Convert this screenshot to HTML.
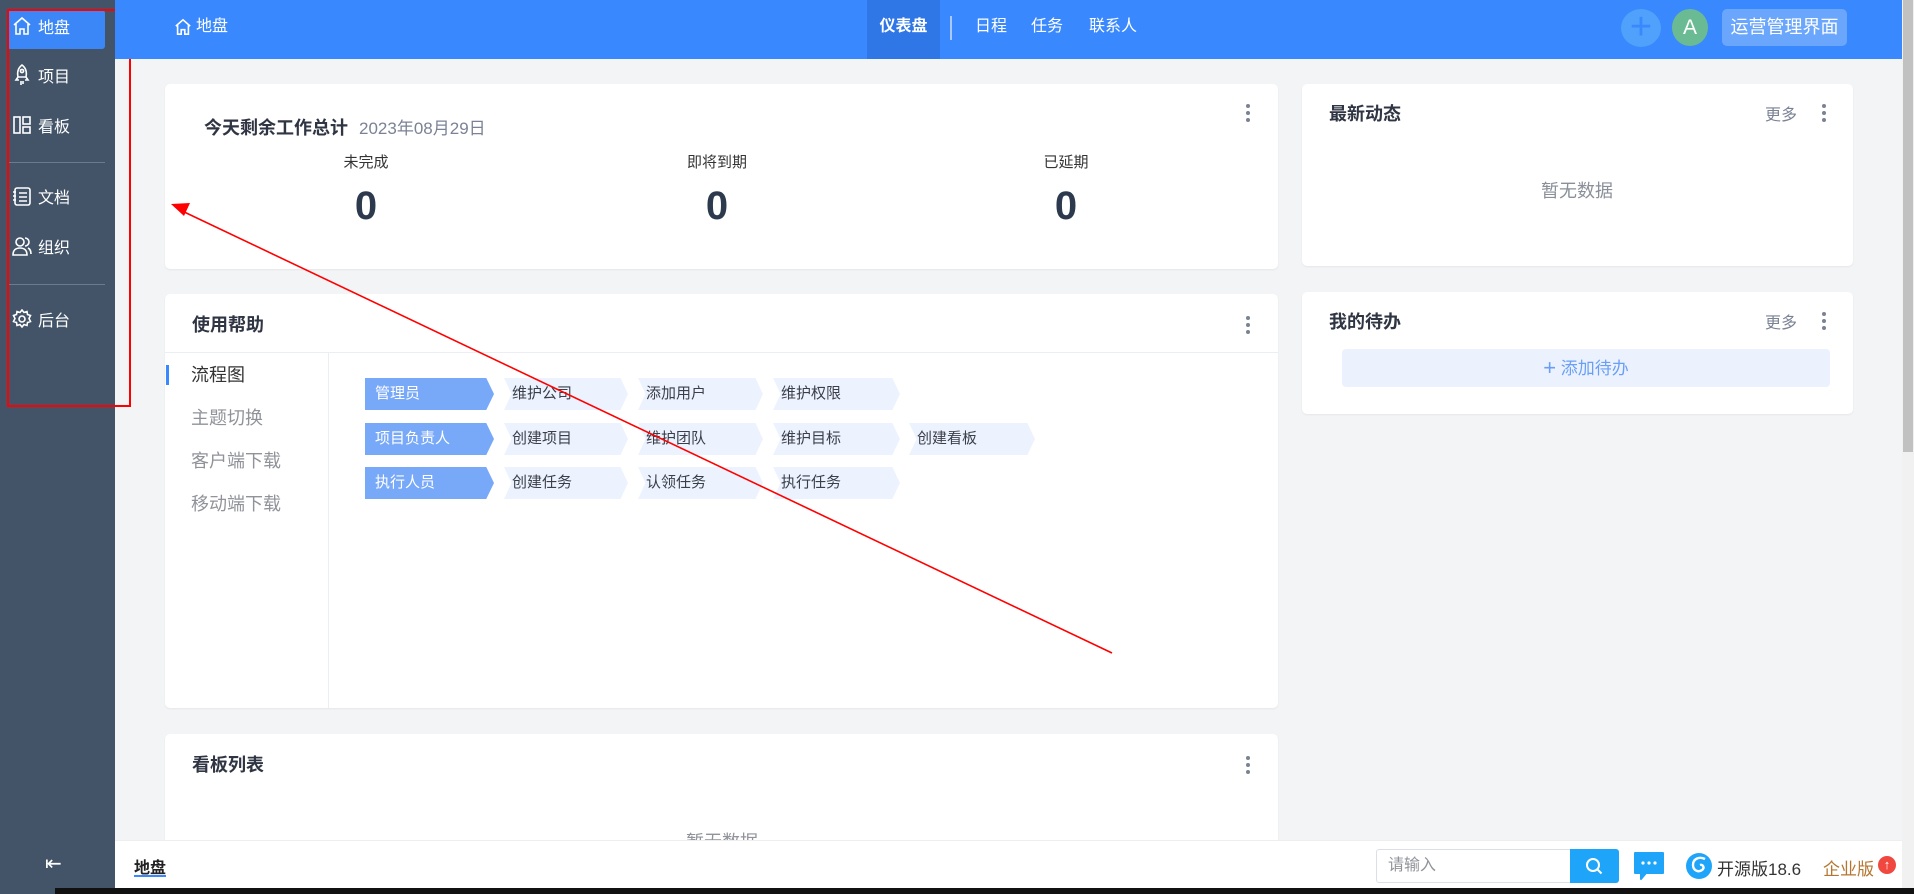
<!DOCTYPE html>
<html><head><meta charset="utf-8"><style>
*{margin:0;padding:0;box-sizing:border-box}
body{width:1914px;height:894px;overflow:hidden;background:#f3f4f6;font-family:"Liberation Sans","Noto Sans CJK SC",sans-serif;position:relative}
.a{position:absolute}
.side{left:0;top:0;width:115px;height:894px;background:#435468}
.si{position:absolute;left:12px;color:#fff;font-size:16px;display:flex;align-items:center;gap:6px;height:24px}
.card{position:absolute;background:#fff;border-radius:5px;box-shadow:0 1px 2px rgba(0,0,0,.06)}
.dots{position:absolute;width:4px}
.dots i{display:block;width:4px;height:4px;border-radius:2px;background:#7a8294;margin-bottom:3px}
.ttl{position:absolute;font-size:18px;font-weight:bold;color:#303544}
.chev{position:absolute;height:32px;font-size:15px;line-height:32px;padding-left:8px;color:#3a3f4a;background:#edf3fe;clip-path:polygon(0 0,94% 0,100% 50%,94% 100%,0 100%,6% 50%)}
.chev.b{background:#78a8f8;color:#fff;padding-left:10px;clip-path:polygon(0 0,94% 0,100% 50%,94% 100%,0 100%)}
.nav{position:absolute;top:0;height:59px;line-height:54px;color:#fff;font-size:16px}
</style></head><body>
<div class="a side"></div>
<div class="a" style="left:7px;top:10px;width:98px;height:39px;background:#3b87f7;border-radius:3px"></div>
<div class="si" style="top:14px"><svg width="20" height="20" viewBox="0 0 20 20" fill="none" stroke="#fff" stroke-width="1.6"><path d="M2 9L10 2l8 7M4 8v10h4v-5h4v5h4V8"/></svg>地盘</div>
<div class="si" style="top:63px"><svg width="20" height="22" viewBox="0 0 20 22" fill="none" stroke="#fff" stroke-width="1.6"><path d="M10 1c4 3 5 7 4 12H6C5 8 6 4 10 1zM6 13l-2 3 3 0M14 13l2 3-3 0M9 17v4M11 17v3"/><circle cx="10" cy="7" r="1.6"/></svg>项目</div>
<div class="si" style="top:113px"><svg width="20" height="20" viewBox="0 0 20 20" fill="none" stroke="#fff" stroke-width="1.6"><rect x="2" y="2" width="6" height="16"/><rect x="11" y="2" width="7" height="7"/><rect x="11" y="12" width="7" height="6"/></svg>看板</div>
<div class="a" style="left:7px;top:162px;width:98px;height:1px;background:#6b7a8e"></div>
<div class="si" style="top:184px"><svg width="20" height="20" viewBox="0 0 20 20" fill="none" stroke="#fff" stroke-width="1.6"><rect x="3" y="2" width="15" height="17" rx="2"/><path d="M7 7h8M7 11h8M7 15h8M1 6h3M1 10h3M1 14h3"/></svg>文档</div>
<div class="si" style="top:234px"><svg width="20" height="20" viewBox="0 0 20 20" fill="none" stroke="#fff" stroke-width="1.6"><circle cx="8" cy="6" r="4"/><path d="M1 19c0-5 3-7 7-7s7 2 7 7zM13 2a4 4 0 010 8M16 12c2 1 3 3 3 6"/></svg>组织</div>
<div class="a" style="left:7px;top:284px;width:98px;height:1px;background:#6b7a8e"></div>
<div class="si" style="top:307px"><svg width="20" height="20" viewBox="0 0 20 20" fill="none" stroke="#fff" stroke-width="1.6"><circle cx="10" cy="10" r="3"/><path d="M10 1l2 2.5 3-1 .5 3 3 1-1.5 3 1.5 3-3 1-.5 3-3-1-2 2.5-2-2.5-3 1-.5-3-3-1 1.5-3L1.5 6.5l3-1 .5-3 3 1z"/></svg>后台</div>
<div class="a" style="left:45px;top:851px;color:#fff;font-size:20px">⇤</div>
<div class="a" style="left:7px;top:9px;width:124px;height:398px;border:2px solid #f00"></div>

<div class="a" style="left:115px;top:0;width:1787px;height:59px;background:#3a88fe"></div>
<div class="nav" style="left:174px;display:flex;align-items:center;gap:4px;height:54px"><svg width="18" height="18" viewBox="0 0 20 20" fill="none" stroke="#fff" stroke-width="1.8"><path d="M2 9L10 2l8 7M4 8v10h4v-5h4v5h4V8"/></svg>地盘</div>
<div class="nav" style="left:867px;width:73px;background:#2f76e6;text-align:center;font-weight:bold">仪表盘</div>
<div class="a" style="left:950px;top:16px;width:2px;height:24px;background:#a9c8fb"></div>
<div class="nav" style="left:975px">日程</div>
<div class="nav" style="left:1031px">任务</div>
<div class="nav" style="left:1089px">联系人</div>
<div class="a" style="left:1621px;top:9px;width:40px;height:38px;border-radius:50%;background:#4fa1fb;color:#3a88fe;font-size:38px;line-height:36px;text-align:center">+</div>
<div class="a" style="left:1672px;top:9px;width:36px;height:37px;border-radius:50%;background:#6abb94;color:#fff;font-size:21px;line-height:37px;text-align:center">A</div>
<div class="a" style="left:1722px;top:9px;width:125px;height:37px;border-radius:5px;background:#6aa6fc;color:#fff;font-size:18px;line-height:37px;text-align:center">运营管理界面</div>
<div class="a" style="left:1902px;top:0;width:12px;height:894px;background:#f1f1f1"></div>
<div class="a" style="left:1903px;top:0;width:10px;height:452px;background:#c1c1c1"></div>

<div class="card" style="left:165px;top:84px;width:1113px;height:185px"></div>
<div class="ttl" style="left:204px;top:114px">今天剩余工作总计 <span style="font-weight:normal;color:#7a8294;font-size:17px;margin-left:6px">2023年08月29日</span></div>
<div class="a" style="left:266px;top:151px;width:200px;text-align:center;font-size:15px;color:#333">未完成</div>
<div class="a" style="left:617px;top:151px;width:200px;text-align:center;font-size:15px;color:#333">即将到期</div>
<div class="a" style="left:966px;top:151px;width:200px;text-align:center;font-size:15px;color:#333">已延期</div>
<div class="a" style="left:266px;top:184px;width:200px;text-align:center;font-size:40px;font-weight:bold;color:#2d3a4e">0</div>
<div class="a" style="left:617px;top:184px;width:200px;text-align:center;font-size:40px;font-weight:bold;color:#2d3a4e">0</div>
<div class="a" style="left:966px;top:184px;width:200px;text-align:center;font-size:40px;font-weight:bold;color:#2d3a4e">0</div>
<div class="dots" style="left:1246px;top:104px"><i></i><i></i><i></i></div>

<div class="card" style="left:165px;top:294px;width:1113px;height:414px"></div>
<div class="ttl" style="left:192px;top:311px">使用帮助</div>
<div class="dots" style="left:1246px;top:316px"><i></i><i></i><i></i></div>
<div class="a" style="left:165px;top:352px;width:1113px;height:1px;background:#ebeef2"></div>
<div class="a" style="left:328px;top:353px;width:1px;height:355px;background:#ebeef2"></div>
<div class="a" style="left:166px;top:365px;width:3px;height:20px;background:#3a88fe"></div>
<div class="a" style="left:191px;top:363px;font-size:18px;color:#333;line-height:24px">流程图</div>
<div class="a" style="left:191px;top:406px;font-size:18px;color:#909399;line-height:24px">主题切换</div>
<div class="a" style="left:191px;top:449px;font-size:18px;color:#909399;line-height:24px">客户端下载</div>
<div class="a" style="left:191px;top:492px;font-size:18px;color:#909399;line-height:24px">移动端下载</div>
<div class="chev b" style="left:365px;top:378px;width:129px">管理员</div>
<div class="chev" style="left:504px;top:378px;width:124px">维护公司</div>
<div class="chev" style="left:638px;top:378px;width:125px">添加用户</div>
<div class="chev" style="left:773px;top:378px;width:127px">维护权限</div>
<div class="chev b" style="left:365px;top:423px;width:129px">项目负责人</div>
<div class="chev" style="left:504px;top:423px;width:124px">创建项目</div>
<div class="chev" style="left:638px;top:423px;width:125px">维护团队</div>
<div class="chev" style="left:773px;top:423px;width:127px">维护目标</div>
<div class="chev" style="left:909px;top:423px;width:126px">创建看板</div>
<div class="chev b" style="left:365px;top:467px;width:129px">执行人员</div>
<div class="chev" style="left:504px;top:467px;width:124px">创建任务</div>
<div class="chev" style="left:638px;top:467px;width:125px">认领任务</div>
<div class="chev" style="left:773px;top:467px;width:127px">执行任务</div>

<div class="card" style="left:165px;top:734px;width:1113px;height:160px"></div>
<div class="ttl" style="left:192px;top:751px">看板列表</div>
<div class="dots" style="left:1246px;top:756px"><i></i><i></i><i></i></div>
<div class="a" style="left:686px;top:828px;font-size:18px;color:#909399">暂无数据</div>

<div class="card" style="left:1302px;top:84px;width:551px;height:182px"></div>
<div class="ttl" style="left:1329px;top:100px">最新动态</div>
<div class="a" style="left:1765px;top:101px;font-size:16px;color:#7a8294">更多</div>
<div class="dots" style="left:1822px;top:104px"><i></i><i></i><i></i></div>
<div class="a" style="left:1541px;top:177px;font-size:18px;color:#8a8f99">暂无数据</div>
<div class="card" style="left:1302px;top:292px;width:551px;height:122px"></div>
<div class="ttl" style="left:1329px;top:308px">我的待办</div>
<div class="a" style="left:1765px;top:309px;font-size:16px;color:#7a8294">更多</div>
<div class="dots" style="left:1822px;top:312px"><i></i><i></i><i></i></div>
<div class="a" style="left:1342px;top:349px;width:488px;height:38px;border-radius:4px;background:#ebf2fd;color:#6a9ff5;font-size:17px;line-height:38px;text-align:center"><span style="font-size:22px;vertical-align:-1px">+</span> 添加待办</div>

<div class="a" style="left:115px;top:840px;width:1787px;height:48px;background:#fff;border-top:1px solid #eee"></div>
<div class="a" style="left:134px;top:854px;font-size:16px;font-weight:bold;color:#222">地盘</div>
<div class="a" style="left:134px;top:875px;width:32px;height:2px;background:#3a88fe"></div>
<div class="a" style="left:1376px;top:849px;width:195px;height:34px;border:1px solid #dcdfe6;border-radius:3px 0 0 3px;font-size:16px;color:#909399;line-height:32px;padding-left:11px">请输入</div>
<div class="a" style="left:1570px;top:849px;width:49px;height:34px;background:#1ea5fa;border-radius:0 3px 3px 0"><svg width="49" height="34" viewBox="0 0 49 34" fill="none" stroke="#fff" stroke-width="2"><circle cx="23" cy="16" r="6"/><path d="M27.5 20.5l4 4"/></svg></div>
<div class="a" style="left:1633px;top:851px"><svg width="32" height="32" viewBox="0 0 32 32"><path d="M2 2h28v20H13l-5 6v-6H2z" fill="#1ea5fa" stroke="#1ea5fa" stroke-linejoin="round" stroke-width="2"/><circle cx="10" cy="12" r="1.6" fill="#fff"/><circle cx="16" cy="12" r="1.6" fill="#fff"/><circle cx="22" cy="12" r="1.6" fill="#fff"/></svg></div>
<div class="a" style="left:1685px;top:851px"><svg width="28" height="30" viewBox="0 0 28 30"><circle cx="14" cy="15" r="13" fill="#1ea5fa"/><path d="M20 8c-6-3-12 0-12 6 0 5 5 8 9 5 3-2 1-6-2-5" fill="none" stroke="#fff" stroke-width="2.4"/></svg></div>
<div class="a" style="left:1717px;top:855px;font-size:17px;color:#333">开源版18.6</div>
<div class="a" style="left:1823px;top:855px;font-size:17px;color:#b5752f">企业版</div>
<div class="a" style="left:1878px;top:856px;width:18px;height:18px;border-radius:50%;background:#f0473f;color:#fff;font-size:13px;line-height:18px;text-align:center;font-weight:bold">↑</div>
<div class="a" style="left:55px;top:888px;width:1859px;height:6px;background:#111"></div>

<svg class="a" style="left:0;top:0" width="1914" height="894"><line x1="1112" y1="653" x2="180" y2="210" stroke="#f00" stroke-width="1.6"/><polygon points="171,204 190,203 184,216" fill="#f00"/></svg>
</body></html>
